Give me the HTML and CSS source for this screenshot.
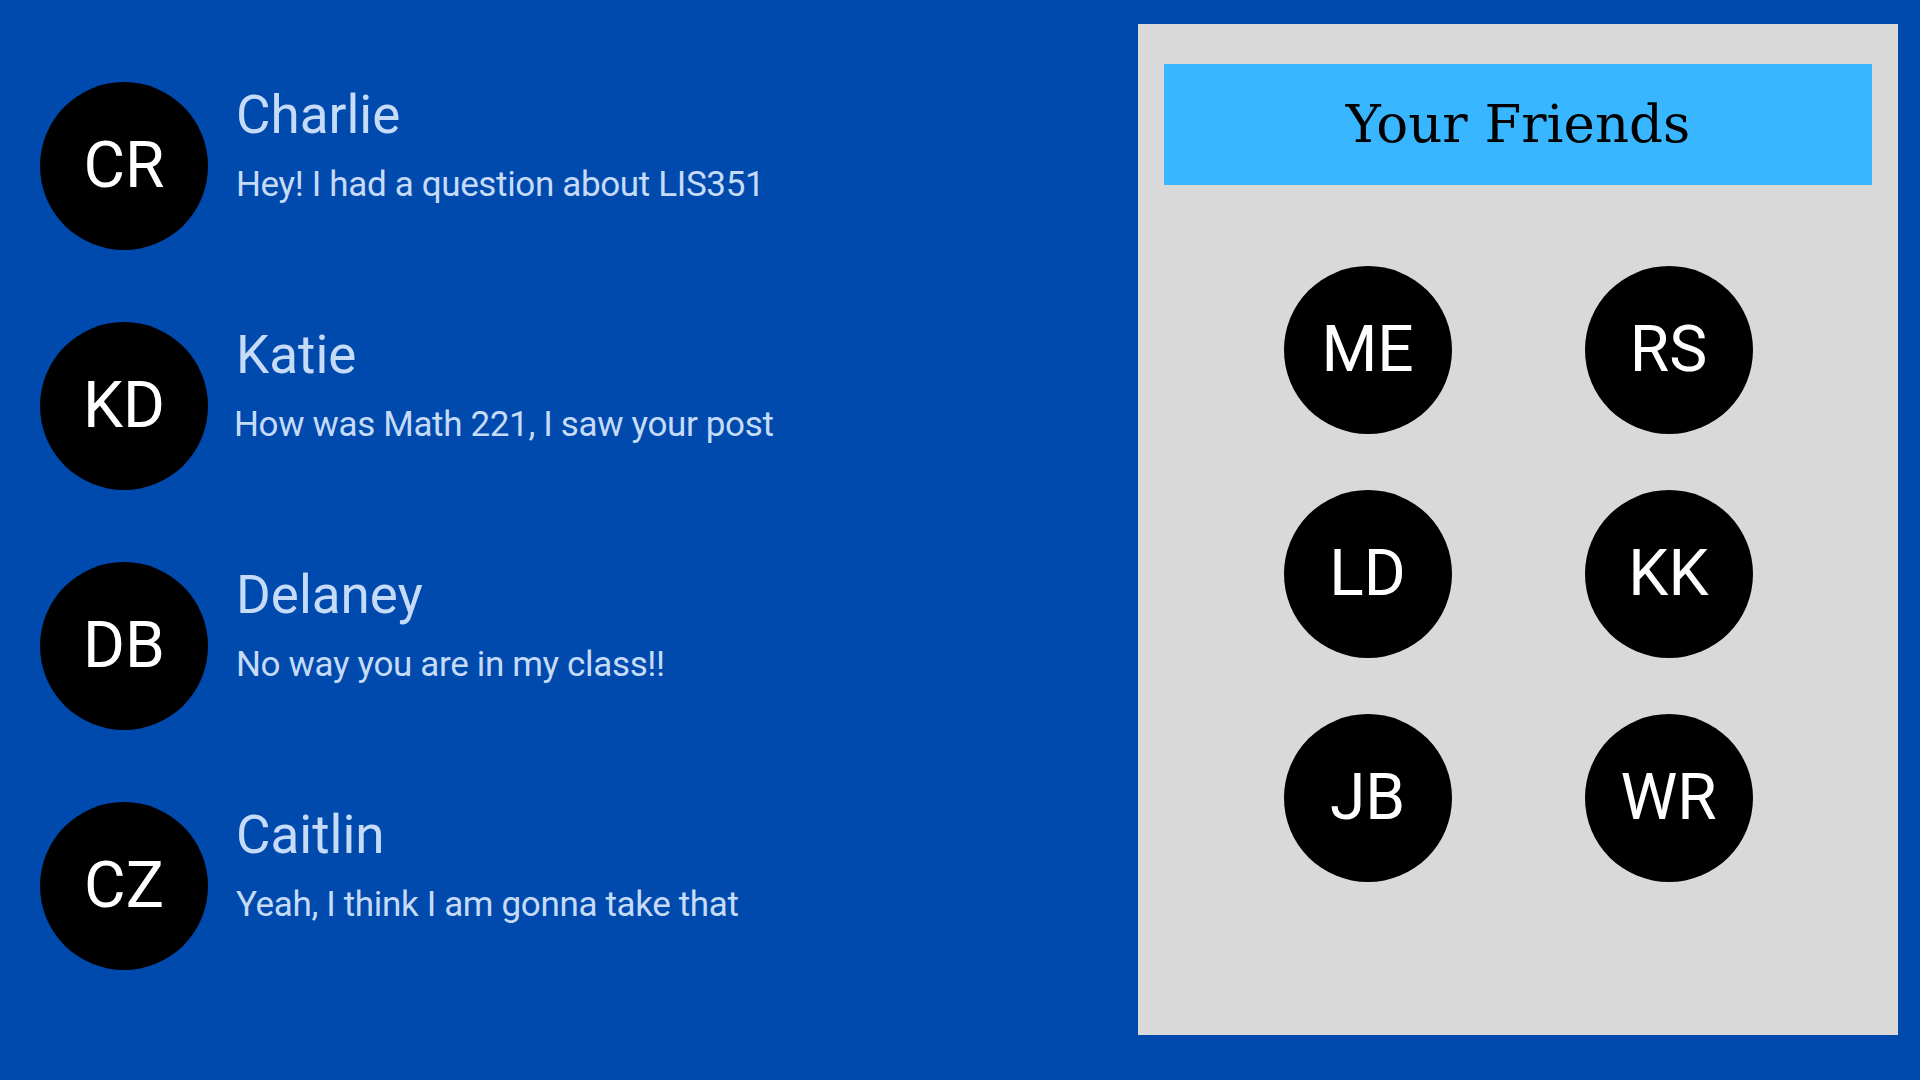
FILE: index.html
```html
<!DOCTYPE html>
<html lang="en">
<head>
<meta charset="utf-8">
<title>Messages</title>
<link rel="stylesheet" href="styles.css">
</head>
<body>
<div class="page">
  <main class="messages">
    <div class="row">
      <div class="avatar">CR</div>
      <div class="text">
        <div class="name">Charlie</div>
        <div class="msg">Hey! I had a question about LIS351</div>
      </div>
    </div>
    <div class="row">
      <div class="avatar">KD</div>
      <div class="text">
        <div class="name">Katie</div>
        <div class="msg msg-shift">How was Math 221, I saw your post</div>
      </div>
    </div>
    <div class="row">
      <div class="avatar">DB</div>
      <div class="text">
        <div class="name">Delaney</div>
        <div class="msg">No way you are in my class!!</div>
      </div>
    </div>
    <div class="row">
      <div class="avatar">CZ</div>
      <div class="text">
        <div class="name">Caitlin</div>
        <div class="msg">Yeah, I think I am gonna take that</div>
      </div>
    </div>
  </main>
  <aside class="panel">
    <div class="panel-header">Your Friends</div>
    <div class="friends">
      <div class="avatar">ME</div>
      <div class="avatar">RS</div>
      <div class="avatar">LD</div>
      <div class="avatar">KK</div>
      <div class="avatar">JB</div>
      <div class="avatar">WR</div>
    </div>
  </aside>
</div>
</body>
</html>
```

FILE: styles.css
```css
html, body {
  margin: 0;
  padding: 0;
  height: 100%;
  overflow: hidden;
}

body {
  background: #004aad;
  font-family: Roboto, "Liberation Sans", sans-serif;
}

.page {
  display: flex;
  height: 1080px;
  box-sizing: border-box;
}

.messages {
  flex: 1;
  display: flex;
  flex-direction: column;
  gap: 72px;
  padding: 82px 0 0 40px;
}

.row {
  display: flex;
  align-items: flex-start;
  gap: 28px;
}

.avatar {
  width: 168px;
  height: 168px;
  border-radius: 50%;
  background: #000;
  color: #fff;
  display: flex;
  align-items: center;
  justify-content: center;
  font-size: 64px;
  line-height: 1;
  flex-shrink: 0;
}

.text {
  padding-top: 3px;
  display: flex;
  flex-direction: column;
}

.name {
  color: #c6dbf7;
  font-size: 53px;
  line-height: 61px;
}

.msg {
  color: #c6dbf7;
  font-size: 35px;
  letter-spacing: -0.35px;
  line-height: 42px;
  margin-top: 18px;
}

.msg-shift {
  margin-left: -2px;
}

.panel {
  width: 760px;
  height: 1011px;
  margin: 24px 22px 0 0;
  background: #d9d9d9;
  box-sizing: border-box;
  padding: 40px 26px 0;
  display: flex;
  flex-direction: column;
  align-items: center;
}

.panel-header {
  align-self: stretch;
  height: 121px;
  background: #38b6ff;
  display: flex;
  align-items: center;
  justify-content: center;
  font-family: "DejaVu Serif", "Liberation Serif", serif;
  font-size: 53px;
  color: #000;
  padding-bottom: 2px;
  box-sizing: border-box;
}

.friends {
  margin-top: 81px;
  display: grid;
  grid-template-columns: 168px 168px;
  column-gap: 133px;
  row-gap: 56px;
}
```
